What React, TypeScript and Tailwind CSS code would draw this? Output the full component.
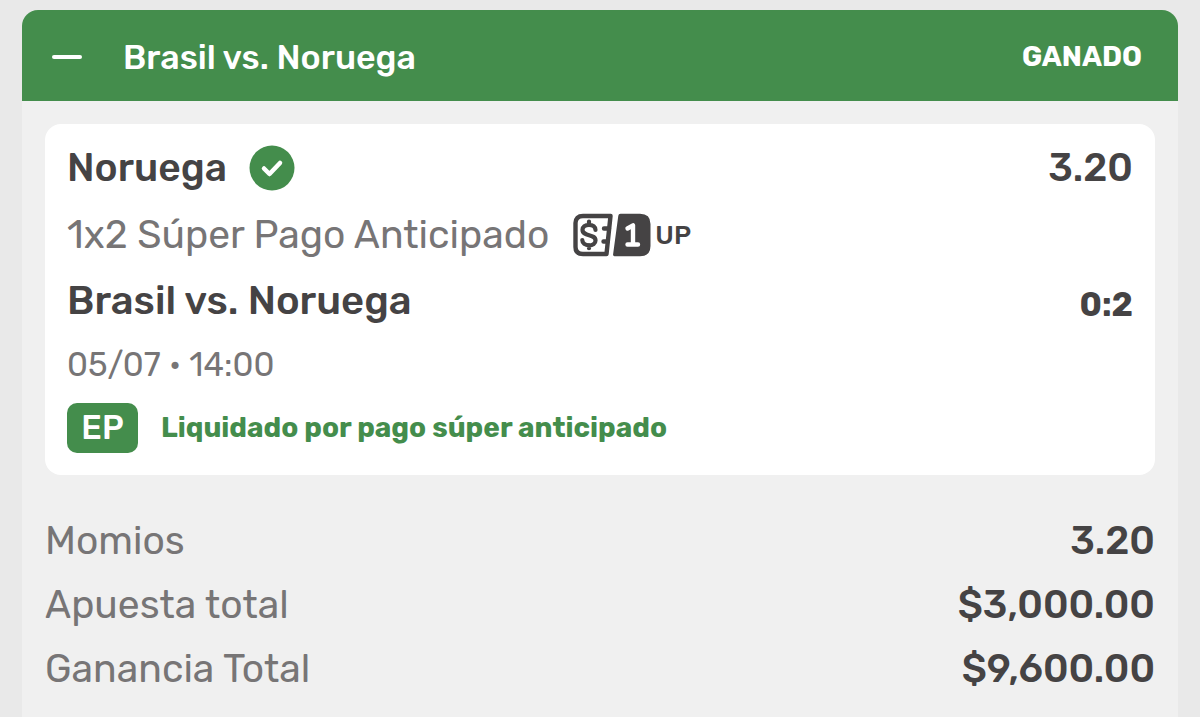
import { useState } from 'react';

const totals = [
  { label: 'Momios', value: '3.20' },
  { label: 'Apuesta total', value: '$3,000.00' },
  { label: 'Ganancia Total', value: '$9,600.00' },
];

function CheckBadge() {
  return (
    <svg width="46" height="46" viewBox="0 0 46 46" fill="none" role="img" aria-label="Ganada">
      <circle cx="23" cy="23" r="22.5" fill="#448d4c" />
      <path
        d="M15 23.5l5.500 5.500L31 18"
        stroke="#fff"
        strokeWidth="4.500"
        strokeLinecap="round"
        strokeLinejoin="round"
      />
    </svg>
  );
}

function OneUpIcon() {
  return (
    <svg width="78" height="44" viewBox="0 0 78 44" fill="none" aria-hidden="true">
      {/* banknote half */}
      <path
        d="M37.500 3H10Q2.500 3 2.500 10V34Q2.500 41 10 41H33.500Z"
        stroke="#454344"
        strokeWidth="4.400"
        strokeLinejoin="round"
      />
      <path
        d="M22.500 17c0-3.200-2.700-5.200-6.500-5.200s-6.500 2-6.500 5c0 7.200 13 3.600 13 10.600 0 3-2.700 4.900-6.500 4.900s-6.700-2-6.700-5.200M16 8.500v3M16 32.200v3"
        stroke="#454344"
        strokeWidth="4.200"
        strokeLinecap="round"
      />
      <path d="M36 15.500h-5M34.500 28.500h-4" stroke="#454344" strokeWidth="4.400" strokeLinecap="round" />
      {/* solid half with the numeral */}
      <path
        d="M47.500 0.800H67Q77.500 0.800 77.500 11V33Q77.500 43.200 67 43.200H41.500Q39.800 43.200 40.100 41.200L45.300 2.800Q45.500 0.800 47.500 0.800Z"
        fill="#454344"
      />
      <path
        d="M54.500 15.500l5.500-3.200V31.500M54.500 31.500h10.500"
        stroke="#fff"
        strokeWidth="4.400"
        strokeLinecap="round"
        strokeLinejoin="round"
      />
    </svg>
  );
}

export default function App() {
  const [open, setOpen] = useState(true);

  return (
    <main className="flex min-h-screen flex-col bg-[#e9e9e9] px-[22px] pt-[10px] font-['Rubik','Roboto',sans-serif] text-[#454344]">
      <section className="flex grow flex-col overflow-hidden rounded-t-2xl bg-[#f0f0f0]">
        <button
          type="button"
          aria-expanded={open}
          onClick={() => setOpen(!open)}
          className="flex h-[91px] w-full items-center bg-[#448d4c] pt-[3px] pr-9 pl-[30px] text-left text-white"
        >
          <span className="h-1 w-[30px] rounded-full bg-white" />
          <span className="ml-[41px] grow text-[34px] font-medium">Brasil vs. Noruega</span>
          <span className="text-[28px] font-bold">GANADO</span>
        </button>

        {open && (
          <div className="px-[23px] pt-[23px] pb-4">
            <article className="rounded-2xl bg-white px-[22px] pt-4 pb-[22px]">
              <div className="flex h-14 items-center">
                <h2 className="text-[39px] font-medium">Noruega</h2>
                <span className="ml-[22px]">
                  <CheckBadge />
                </span>
                <span className="ml-auto text-[39px] font-medium">3.20</span>
              </div>
              <div className="flex h-[78px] items-center">
                <span className="text-[39px] text-[#777576]">1x2 Súper Pago Anticipado</span>
                <span className="ml-6 flex items-center gap-1">
                  <OneUpIcon />
                  <span className="text-[26px] font-medium">UP</span>
                </span>
              </div>
              <div className="flex h-[54px] items-end justify-between pb-[3px]">
                <h3 className="text-[40px] leading-[48px] font-medium">Brasil vs. Noruega</h3>
                <span className="text-[33px] leading-10 font-bold">0:2</span>
              </div>
              <div className="flex h-[73px] items-center text-[33px] text-[#777576]">
                <time>05/07 • 14:00</time>
              </div>
              <div className="mt-0.5 flex items-center gap-[23px] text-[#448d4c]">
                <span className="flex h-[50px] w-[71px] items-center justify-center rounded-[10px] bg-[#448d4c] text-[33px] font-medium text-white">
                  EP
                </span>
                <span className="text-[28px] font-bold">Liquidado por pago súper anticipado</span>
              </div>
            </article>

            <dl className="mt-[34px]">
              {totals.map((t) => (
                <div key={t.label} className="flex h-16 items-center justify-between text-[39px]">
                  <dt className="text-[#777576]">{t.label}</dt>
                  <dd className="font-medium">{t.value}</dd>
                </div>
              ))}
            </dl>
          </div>
        )}
      </section>
    </main>
  );
}
